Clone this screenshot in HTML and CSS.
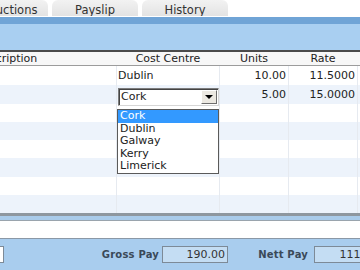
FILE: index.html
```html
<!DOCTYPE html>
<html lang="en">

<head>
    <meta charset="UTF-8" />
    <title>Payslip - Additions</title>
    <link rel="stylesheet" href="styles.css">
</head>

<body>
    <div class="screen">
        <!-- tab strip -->
        <div class="tabs">
            <div class="tab">Deductions</div>
            <div class="tab">Payslip</div>
            <div class="tab">History</div>
        </div>
        <div class="band"></div>

        <!-- lines grid -->
        <div class="grid">
            <div class="row head">
                <div class="cell first">Description</div>
                <div class="cell">Cost Centre</div>
                <div class="cell">Units</div>
                <div class="cell">Rate</div>
                <div class="cell"></div>
            </div>
            <div class="row">
                <div class="cell"></div>
                <div class="cell">Dublin</div>
                <div class="cell num">10.00</div>
                <div class="cell num">11.5000</div>
                <div class="cell"></div>
            </div>
            <div class="row alt">
                <div class="cell"></div>
                <div class="cell drop">
                    <div class="select">
                        <span>Cork</span>
                        <span class="arrow"></span>
                    </div>
                    <ul class="options">
                        <li class="on">Cork</li>
                        <li>Dublin</li>
                        <li>Galway</li>
                        <li>Kerry</li>
                        <li>Limerick</li>
                    </ul>
                </div>
                <div class="cell num">5.00</div>
                <div class="cell num">15.0000</div>
                <div class="cell"></div>
            </div>
            <div class="row"><div class="cell"></div><div class="cell"></div><div class="cell"></div><div class="cell"></div><div class="cell"></div></div>
            <div class="row alt"><div class="cell"></div><div class="cell"></div><div class="cell"></div><div class="cell"></div><div class="cell"></div></div>
            <div class="row"><div class="cell"></div><div class="cell"></div><div class="cell"></div><div class="cell"></div><div class="cell"></div></div>
            <div class="row alt"><div class="cell"></div><div class="cell"></div><div class="cell"></div><div class="cell"></div><div class="cell"></div></div>
            <div class="row"><div class="cell"></div><div class="cell"></div><div class="cell"></div><div class="cell"></div><div class="cell"></div></div>
            <div class="row alt"><div class="cell"></div><div class="cell"></div><div class="cell"></div><div class="cell"></div><div class="cell"></div></div>
        </div>

        <div class="sep"></div>
        <div class="scroll"></div>

        <!-- totals -->
        <div class="totals">
            <div class="box white">4</div>
            <div class="label gross">Gross Pay</div>
            <div class="box gross-box">190.00</div>
            <div class="label nett">Nett Pay</div>
            <div class="box nett-box">111.00</div>
        </div>
    </div>
</body>

</html>
```

FILE: styles.css
```css
* {
    margin: 0;
    padding: 0;
    box-sizing: border-box;
}

ul {
    list-style: none;
}

body {
    overflow: hidden;
    background: #fff;
    font: 11px "DejaVu Sans", Verdana, sans-serif;
    color: #222;
}

.screen {
    width: 520px;
    margin-left: -94px;
}

/* tabs */
.tabs {
    display: flex;
    gap: 4px;
    height: 17px;
    padding-left: 56px;
}

.tab {
    width: 86px;
    height: 16px;
    border-radius: 6px 6px 0 0;
    background: linear-gradient(#f2f2f2, #e3e3e3);
    text-align: center;
    font-size: 11.5px;
    line-height: 20px;
    color: #333;
    overflow: hidden;
}

.band {
    height: 33px;
    border-top: 7px solid #70a4d6;
    background: #a9cff1;
}

/* grid */
.row {
    display: grid;
    grid-template-columns: 211px 103px 69px 69px 1fr;
    height: 18px;
    background: #fff;
}

.row.alt {
    background: #edf3fb;
}

.row:nth-child(2),
.row:nth-child(3),
.row:nth-child(7) {
    height: 19px;
}

.cell {
    border-right: 1px solid #e6eaf0;
    padding: 0 2px 0 1px;
    line-height: 19px;
    white-space: nowrap;
}

.cell.num {
    text-align: right;
}

.row.head {
    height: 16px;
    border-top: 2px solid #4b4b4b;
    border-bottom: 1px solid #9c9c9c;
    background: #f7f7f7;
}

.row.head .cell {
    text-align: center;
    line-height: 14px;
    border-right: none;
}

.row.head .cell.first {
    padding-right: 12px;
}

.drop {
    position: relative;
}

.select {
    display: flex;
    align-items: center;
    justify-content: space-between;
    width: 101px;
    height: 18px;
    margin-top: 3px;
    padding-left: 2px;
    background: #fff;
    border: 1px solid;
    border-color: #7c7c7c #d6d6d6 #d6d6d6 #7c7c7c;
    box-shadow: inset 1px 1px 0 #444;
    line-height: 14px;
}

.arrow {
    position: relative;
    width: 16px;
    height: 14px;
    margin-right: 1px;
    background: #ece9e2;
    border: 1px solid;
    border-color: #fff #6e6e6e #6e6e6e #fff;
}

.arrow::after {
    content: "";
    position: absolute;
    left: 3px;
    top: 4px;
    border-left: 4px solid transparent;
    border-right: 4px solid transparent;
    border-top: 4px solid #000;
}

.options {
    position: absolute;
    left: 0;
    top: 24px;
    width: 102px;
    background: #fff;
    border: 1px solid #5a5a5a;
    z-index: 2;
}

.options li {
    height: 12.6px;
    line-height: 12.6px;
    padding-left: 2px;
}

.options li.on {
    background: #3399ff;
    color: #fff;
}

/* footer */
.sep {
    height: 8px;
    border-top: 3px solid #8e979f;
    border-bottom: 1px solid #9aa4ad;
    background: #a9cbea;
}

.scroll {
    height: 18px;
    background: #fff;
    border-bottom: 1px solid #8b98a6;
}

.totals {
    display: flex;
    align-items: flex-start;
    height: 31px;
    padding-top: 7px;
    background: #a9cdee;
}

.box {
    height: 17px;
    border: 1px solid #7d8a97;
    background: #c4ddf3;
    text-align: right;
    padding-right: 2px;
    line-height: 15px;
    color: #333;
}

.box.white {
    width: 60px;
    margin-left: 38px;
    background: #fff;
    padding-right: 4px;
}

.label {
    text-align: right;
    font-weight: bold;
    font-size: 10px;
    line-height: 17px;
    color: #3a4958;
    letter-spacing: 0.2px;
}

.label.gross {
    width: 155px;
}

.gross-box {
    width: 66px;
    margin-left: 3px;
}

.label.nett {
    width: 80px;
}

.nett-box {
    width: 67px;
    margin-left: 6px;
}
```
